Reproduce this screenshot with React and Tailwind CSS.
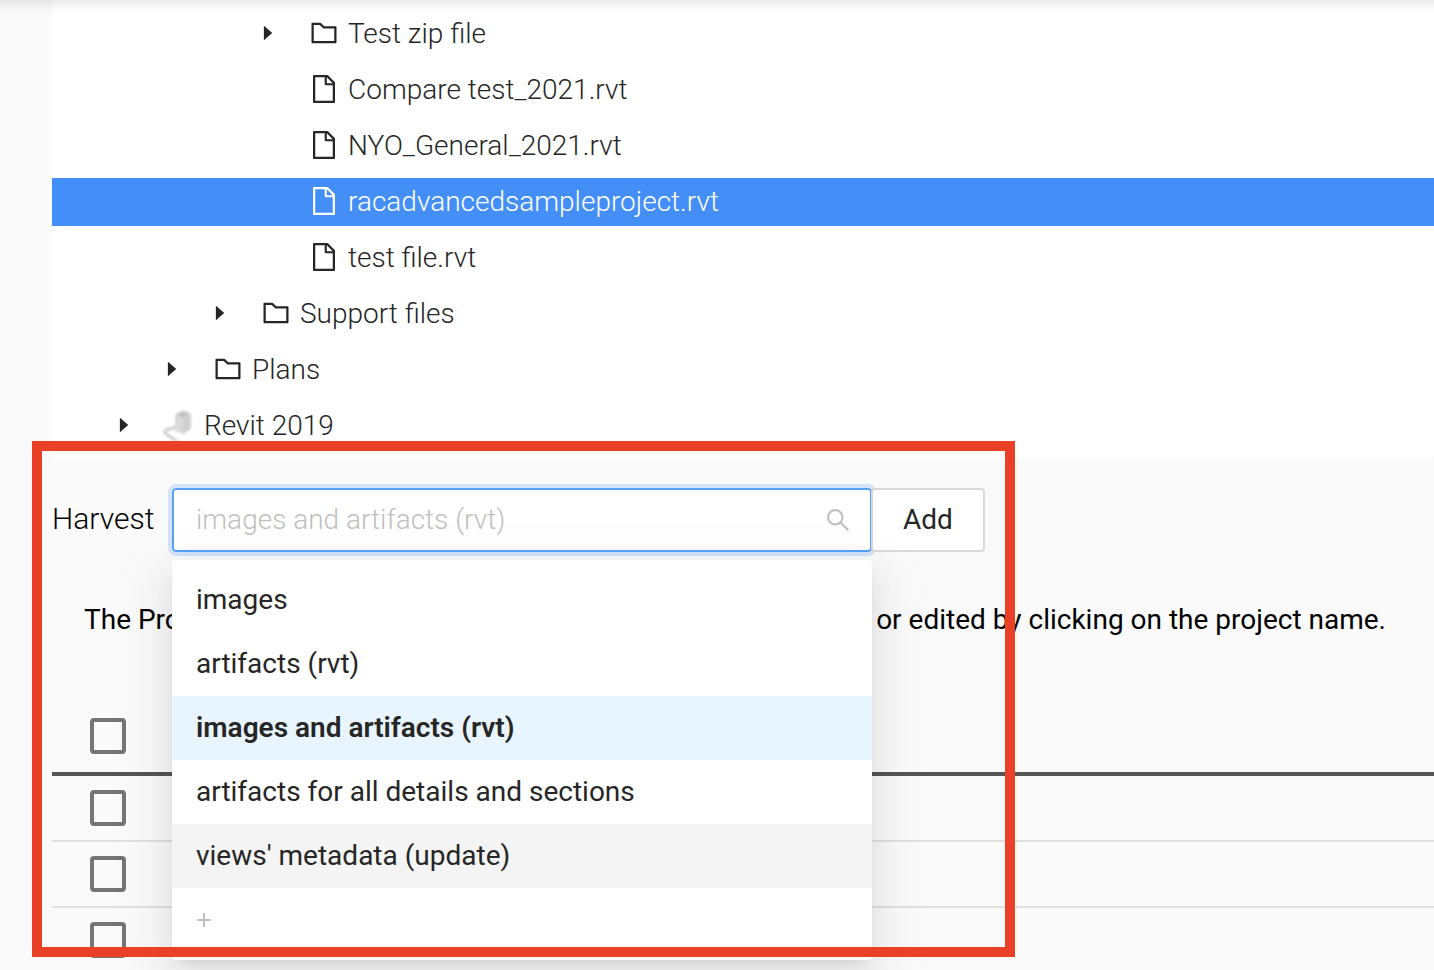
import React, { useState } from 'react';
import { AiFillCaretRight, AiOutlineFile, AiOutlineFolder, AiOutlineSearch } from 'react-icons/ai';

const treeItems = [
  { name: 'Test zip file', type: 'folder', indent: 'pl-48' },
  { name: 'Compare test_2021.rvt', type: 'file', indent: 'pl-48' },
  { name: 'NYO_General_2021.rvt', type: 'file', indent: 'pl-48' },
  { name: 'racadvancedsampleproject.rvt', type: 'file', indent: 'pl-48' },
  { name: 'test file.rvt', type: 'file', indent: 'pl-48' },
  { name: 'Support files', type: 'folder', indent: 'pl-36' },
  { name: 'Plans', type: 'folder', indent: 'pl-24' },
  { name: 'Revit 2019', type: 'project', indent: 'pl-12' },
];

const harvestOptions = [
  'images',
  'artifacts (rvt)',
  'images and artifacts (rvt)',
  'artifacts for all details and sections',
  "views' metadata (update)",
];

const projectRows = [1, 2, 3];

const ProjectIcon = () => (
  <svg width="32" height="32" viewBox="0 0 32 32" fill="none" className="overflow-visible blur-[1px]">
    <path d="M12 18 L2 21 Q-1 23 2 25 L14 33" stroke="#cfcfcf" strokeWidth="3" strokeLinejoin="round" />
    <path d="M11 6 Q11 5 13 4 L18 2 Q20 1 22 2 L26 4 Q27 5 27 6 V20 L19 25 L11 22 Z" fill="#dadada" />
    <path d="M12 6 L19 2 L26 5 L19 9 Z" fill="#c4c4c4" />
    <path d="M19 9 L27 6 V20 L19 25 Z" fill="#d0d0d0" />
  </svg>
);

const TreeIcon = ({ type }) => {
  switch (type) {
    case 'folder':
      return <AiOutlineFolder size={32} />;
    case 'file':
      return <AiOutlineFile size={32} />;
    default:
      return <ProjectIcon />;
  }
};

const TreeRow = ({ item, selected, onSelect }) => (
  <li
    role="treeitem"
    aria-selected={selected}
    onClick={onSelect}
    className={`flex h-12 cursor-pointer items-center ${item.indent} ${selected ? 'bg-[#448ef7] text-white' : ''}`}
  >
    {item.type === 'file' ? (
      <span className="w-12 shrink-0" />
    ) : (
      <button
        type="button"
        aria-label={`Expand ${item.name}`}
        className="flex h-12 w-12 shrink-0 items-center justify-center pb-[2px]"
      >
        <AiFillCaretRight size={20} />
      </button>
    )}
    <span className="ml-2 flex w-12 shrink-0 justify-center pb-[2px]">
      <TreeIcon type={item.type} />
    </span>
    <span className="whitespace-nowrap">{item.name}</span>
  </li>
);

const HarvestSelect = ({ value, onChange }) => (
  <div className="relative w-[700px]">
    <input
      id="harvest"
      type="text"
      role="combobox"
      aria-expanded="true"
      aria-controls="harvest-options"
      placeholder={value}
      className="block h-16 w-full rounded border-2 border-[#57a2f8] bg-white pr-16 pb-[2px] pl-[22px] font-light outline-4 outline-[#d4e3f9] placeholder:text-[#bfbfbf]"
    />
    <AiOutlineSearch size={28} className="pointer-events-none absolute top-[18px] right-5 text-[#bfbfbf]" />
    <ul
      id="harvest-options"
      role="listbox"
      aria-label="Harvest options"
      className="absolute top-18 left-0 z-10 w-full rounded bg-white py-2 text-[#262626] shadow-[0_6px_12px_-8px_rgba(0,0,0,0.12),0_12px_32px_0_rgba(0,0,0,0.08),0_18px_56px_16px_rgba(0,0,0,0.05)]"
    >
      {harvestOptions.map((option, i) => (
        <li
          key={option}
          role="option"
          aria-selected={option === value}
          onClick={() => onChange(option)}
          className={`flex h-16 cursor-pointer items-center px-6 ${
            option === value ? 'bg-[#e8f5fe] font-semibold' : i === 4 ? 'bg-[#f4f4f4]' : ''
          }`}
        >
          {option}
        </li>
      ))}
      <li className="flex h-16 items-center px-6 text-[#bfbfbf]">
        <svg width="16" height="16" viewBox="0 0 16 16" stroke="currentColor" strokeWidth="2">
          <path d="M1 8 H15 M8 1 V15" />
        </svg>
      </li>
    </ul>
  </div>
);

const Checkbox = ({ label }) => (
  <input
    type="checkbox"
    aria-label={label}
    className="mx-auto block size-9 appearance-none rounded border-4 border-[#757575] checked:bg-[#757575]"
  />
);

const App = () => {
  const [selectedFile, setSelectedFile] = useState('racadvancedsampleproject.rvt');
  const [harvest, setHarvest] = useState('images and artifacts (rvt)');

  return (
    <div className="relative h-screen overflow-hidden bg-[#fafafa] pl-13 font-[Roboto,sans-serif] text-[28px] leading-8 text-black">
      {/* Shadow cast by the app bar */}
      <div className="pointer-events-none absolute inset-x-0 top-0 z-10 h-3 bg-linear-to-b from-black/8 to-transparent" />

      <ul role="tree" aria-label="Project files" className="flex flex-col gap-2 rounded-b bg-white pt-[10px] pb-2 font-light text-[#262626]">
        {treeItems.map((item) => (
          <TreeRow
            key={item.name}
            item={item}
            selected={item.name === selectedFile}
            onSelect={() => setSelectedFile(item.name)}
          />
        ))}
      </ul>

      <section className="relative">
        <div className="flex items-center pt-[30px]">
          <label htmlFor="harvest" className="w-30 shrink-0 pb-[2px] text-[30px] font-light">
            Harvest
          </label>
          <HarvestSelect value={harvest} onChange={setHarvest} />
          <button
            type="button"
            className="relative -ml-px h-16 rounded border-2 border-[#d9d9d9] bg-white px-[30px] text-[#262626]"
          >
            Add
          </button>
        </div>

        <p className="flex justify-between pt-13 pr-12 pl-8 whitespace-nowrap">
          <span>The Projects</span>
          <span>can be removed or edited by clicking on the project name.</span>
        </p>

        <table className="mt-16 w-full border-collapse">
          <thead>
            <tr className="border-b-4 border-[#555555]">
              <th className="w-28 py-[18px]">
                <Checkbox label="Select all projects" />
              </th>
              <th />
            </tr>
          </thead>
          <tbody>
            {projectRows.map((row) => (
              <tr key={row} className="border-b-2 border-[#e0e0e0]">
                <td className="py-[14px]">
                  <Checkbox label={`Select project ${row}`} />
                </td>
                <td />
              </tr>
            ))}
          </tbody>
        </table>

        {/* Callout frame around the harvest controls */}
        <div className="pointer-events-none absolute -top-[17px] -left-5 z-20 h-[516px] w-[983px] border-10 border-[#ea4025]" />
      </section>
    </div>
  );
};

export default App;
